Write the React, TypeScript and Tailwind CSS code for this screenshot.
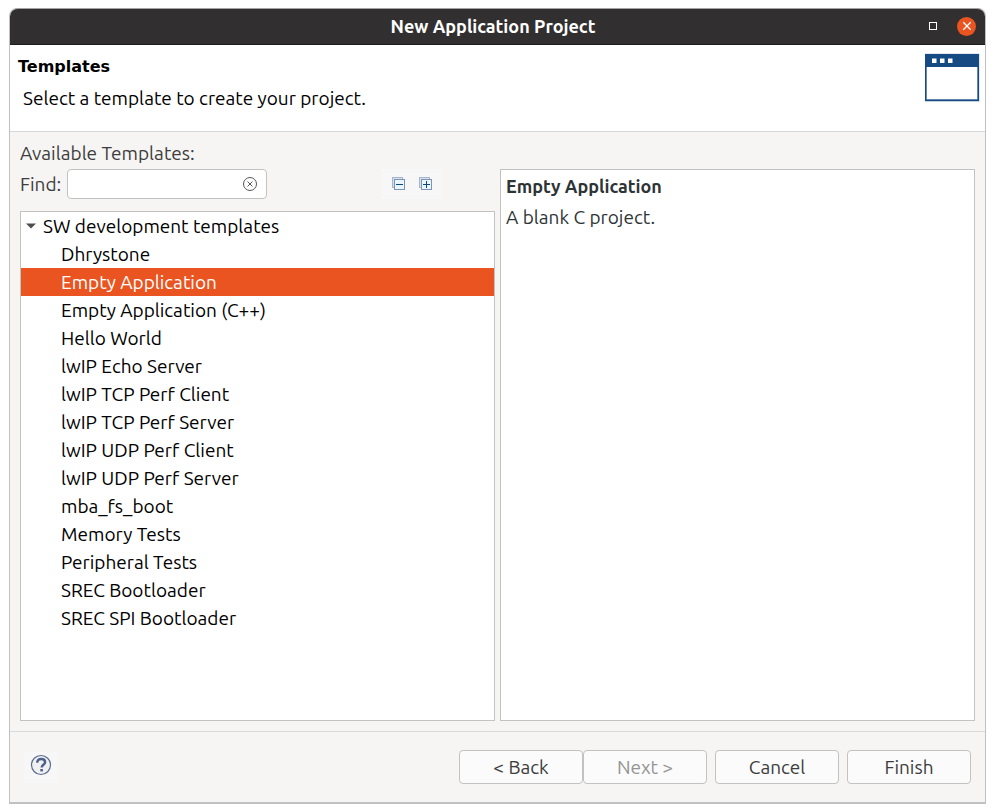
import { useState } from "react";

const templates = [
  "Dhrystone",
  "Empty Application",
  "Empty Application (C++)",
  "Hello World",
  "lwIP Echo Server",
  "lwIP TCP Perf Client",
  "lwIP TCP Perf Server",
  "lwIP UDP Perf Client",
  "lwIP UDP Perf Server",
  "mba_fs_boot",
  "Memory Tests",
  "Peripheral Tests",
  "SREC Bootloader",
  "SREC SPI Bootloader",
];

function TitleBar() {
  return (
    <header className="grid h-[37px] shrink-0 grid-cols-[1fr_auto_1fr] items-center rounded-t-lg border-t border-b border-t-[#a5a4a3] border-b-[#1e1c1c] bg-[#322f30] pr-[9px] pb-px">
      <span />
      <h1 className="text-lg leading-7 font-bold text-white">New Application Project</h1>
      <div className="flex items-center justify-end gap-5">
        <button type="button" aria-label="Maximize" className="size-2 border border-white" />
        <button
          type="button"
          aria-label="Close"
          className="flex size-[19px] items-center justify-center rounded-full bg-[#e95420]"
        >
          <svg viewBox="0 0 10 10" className="size-2.5" stroke="#fff" strokeWidth="1.3">
            <path d="M1.3 1.3 8.7 8.7M8.7 1.3 1.3 8.7" />
          </svg>
        </button>
      </div>
    </header>
  );
}

function WindowLogo() {
  return (
    <svg viewBox="0 0 56 50" className="h-[50px] w-14" aria-hidden="true">
      <rect x="1" y="0.5" width="54.5" height="48.500" fill="#c3d0df" />
      <rect x="1" y="1" width="54" height="47" fill="#154a82" />
      <rect x="2.500" y="14" width="51" height="32.500" fill="#b4c5d8" />
      <rect x="3" y="14" width="50" height="32" fill="#fff" />
      <rect x="8" y="5.500" width="4.500" height="4.500" fill="#fff" />
      <rect x="16" y="5.500" width="4.500" height="4.500" fill="#fff" />
      <rect x="24" y="5.500" width="4.500" height="4.500" fill="#fff" />
    </svg>
  );
}

function TreeToolIcon({ expand }: { expand: boolean }) {
  return (
    <svg viewBox="0 0 14 14" className="size-3.5" aria-hidden="true" shapeRendering="crispEdges">
      <rect x="0.5" y="0.5" width="10" height="10" fill="#d3e2f0" stroke="#a5b6cf" />
      <rect x="2.5" y="2.5" width="10" height="10" fill="#e9f5fc" stroke="#8192b2" />
      <path d={expand ? "M4 7.500h7M7.500 4v7" : "M4 7.500h7"} stroke="#0b4a80" />
    </svg>
  );
}

export default function App() {
  const [selected, setSelected] = useState("Empty Application");
  const [query, setQuery] = useState("");
  const dialogButton =
    "h-[34px] w-[124px] rounded border border-[#c2c2c1] bg-[#fbfbfb] text-center text-[#3d3d3d] disabled:text-[#959595]";

  return (
    <div className="flex h-screen flex-col bg-white px-[9px] py-2 font-['Ubuntu','Noto_Sans',sans-serif] text-[19px] leading-6 text-[#3d3d3d]">
      <div className="flex min-h-0 flex-1 flex-col rounded-t-lg border-x border-b-2 border-[#c1c1c1] bg-[#f6f5f3]">
        <TitleBar />

        <section className="flex h-[87px] shrink-0 justify-between border-b border-[#d8d8d8] bg-white pt-2 pr-[5px] pl-2 text-black">
          <div>
            <h2 className="font-['DejaVu_Sans',sans-serif] text-base leading-7 font-bold">Templates</h2>
            <p className="pt-[3px] pl-[5px] leading-7">Select a template to create your project.</p>
          </div>
          <WindowLogo />
        </section>

        <main className="flex min-h-0 flex-1 flex-col border-b border-[#dadada] px-2.5 pt-[9px] pb-2.5">
          <p className="pb-1">Available Templates:</p>
          <div className="grid min-h-0 flex-1 grid-cols-2 gap-[5px]">
            <div className="flex min-h-0 flex-col gap-3">
              <div className="flex h-[30px] items-center justify-between">
                <div className="flex items-center gap-[5px]">
                  <label htmlFor="find" className="w-[42px]">
                    Find:
                  </label>
                  <div className="flex h-[30px] w-[200px] items-center rounded border border-[#c2c2c1] bg-white pr-2">
                    <input
                      id="find"
                      type="text"
                      value={query}
                      onChange={(e) => setQuery(e.target.value)}
                      className="min-w-0 flex-1 bg-transparent px-2 outline-none"
                    />
                    <button type="button" aria-label="Clear" onClick={() => setQuery("")}>
                      <svg viewBox="0 0 16 16" className="size-4" fill="none" stroke="#555">
                        <circle cx="8" cy="8" r="6.500" />
                        <path d="M5.500 5.500 10.500 10.500M10.500 5.500 5.500 10.500" />
                      </svg>
                    </button>
                  </div>
                </div>
                <div className="mr-[53px] flex h-[30px] items-center gap-[13px] bg-[#f7f7f7] pr-[9px] pl-[11px]">
                  <button type="button" aria-label="Collapse all">
                    <TreeToolIcon expand={false} />
                  </button>
                  <button type="button" aria-label="Expand all">
                    <TreeToolIcon expand />
                  </button>
                </div>
              </div>

              <div
                role="tree"
                aria-label="Available Templates"
                className="min-h-0 flex-1 overflow-hidden border border-[#c2c2c1] bg-white leading-7 text-black"
              >
                <div role="treeitem" aria-expanded="true" className="flex h-7 items-center gap-[7px] pl-[5px]">
                  <svg viewBox="0 0 10 6" className="h-1.5 w-2.5" aria-hidden="true">
                    <path d="M0 0.500h10L5 5.500z" fill="#4d4d4d" />
                  </svg>
                  <span>SW development templates</span>
                </div>
                <div role="group">
                  {templates.map((name) => (
                    <div
                      key={name}
                      role="treeitem"
                      aria-selected={name === selected}
                      onClick={() => setSelected(name)}
                      className={
                        name === selected
                          ? "h-7 bg-[#e95420] pl-10 text-white"
                          : "h-7 pl-10"
                      }
                    >
                      {name}
                    </div>
                  ))}
                </div>
              </div>
            </div>

            <article className="flex flex-col gap-px border border-[#c2c2c1] bg-white px-[5px] pt-px leading-[30px] text-[#2e3436]">
              <h3 className="text-lg leading-[30px] font-bold">{selected}</h3>
              <p>A blank C project.</p>
            </article>
          </div>
        </main>

        <footer className="flex h-[70px] shrink-0 items-center justify-between px-3.5">
          <button
            type="button"
            aria-label="Help"
            className="flex h-[31px] w-[34px] items-center justify-center bg-[#f7f7f7] pb-1"
          >
            <svg viewBox="0 0 22 22" className="size-[22px]" fill="none">
              <circle cx="11" cy="11" r="9.500" fill="#f0f0f0" stroke="#5c6b91" strokeWidth="1.200" />
              <path
                d="M7.300 8.700C7.200 6.400 8.800 5 11.200 5c2.300 0 3.900 1.300 3.900 3.200 0 2.500-3.400 2.700-3.400 5.300"
                stroke="#4d5f8c"
                strokeWidth="2.400"
              />
              <rect x="10.300" y="15" width="2.600" height="2.400" fill="#4d5f8c" />
            </svg>
          </button>
          <div className="flex gap-2">
            <div className="flex">
              <button type="button" className={dialogButton}>
                &lt; Back
              </button>
              <button type="button" disabled className={dialogButton}>
                Next &gt;
              </button>
            </div>
            <button type="button" className={dialogButton}>
              Cancel
            </button>
            <button type="button" className={dialogButton}>
              Finish
            </button>
          </div>
        </footer>
      </div>
    </div>
  );
}
